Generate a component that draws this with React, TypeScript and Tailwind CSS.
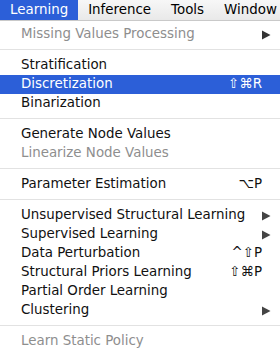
import React from "react";

type Item =
  | { sep: true }
  | { sep?: false; label: string; shortcut?: string; sub?: boolean; disabled?: boolean; active?: boolean };

const items: Item[] = [
  { label: "Missing Values Processing", sub: true, disabled: true },
  { sep: true },
  { label: "Stratification" },
  { label: "Discretization", shortcut: "⇧⌘R", active: true },
  { label: "Binarization" },
  { sep: true },
  { label: "Generate Node Values" },
  { label: "Linearize Node Values", disabled: true },
  { sep: true },
  { label: "Parameter Estimation", shortcut: "⌥P" },
  { sep: true },
  { label: "Unsupervised Structural Learning", sub: true },
  { label: "Supervised Learning", sub: true },
  { label: "Data Perturbation", shortcut: "^⇧P" },
  { label: "Structural Priors Learning", shortcut: "⇧⌘P" },
  { label: "Partial Order Learning" },
  { label: "Clustering", sub: true },
  { sep: true },
  { label: "Learn Static Policy", disabled: true },
];

function Arrow({ color }: { color: string }) {
  return (
    <svg width="9" height="10" viewBox="0 0 9 10" className="shrink-0">
      <polygon points="0,0.5 8.5,5 0,9.5" fill={color} />
    </svg>
  );
}

export default function App() {
  return (
    <div
      className="w-[280px] h-[356px] overflow-hidden bg-white text-[13.4px] text-[#111]"
      style={{ fontFamily: '"DejaVu Sans", sans-serif' }}
    >
      <div className="flex h-[21px] items-stretch bg-gradient-to-b from-[#f7f7f7] to-[#e9e9e9] border-b border-[#c9c9c9]">
        <div className="flex items-center px-[10px] bg-[#2c5fd8] text-white">Learning</div>
        <div className="flex items-center px-[10px] text-black">Inference</div>
        <div className="flex items-center px-[10px] text-black">Tools</div>
        <div className="flex items-center px-[10px] text-black">Window</div>
      </div>
      <div className="pt-[4px]">
        {items.map((it, i) =>
          it.sep ? (
            <div key={i} className="h-[12px] pt-[5px]">
              <div className="h-px bg-[#e2e2e2]" />
            </div>
          ) : (
            <div
              key={i}
              className={
                "flex h-[19px] items-center justify-between pl-[21px] pr-[9px] " +
                (it.active ? "bg-[#2c5fd8] text-white" : it.disabled ? "text-[#8e8e8e]" : "text-[#111]")
              }
            >
              <span className="whitespace-nowrap">{it.label}</span>
              {it.shortcut ? (
                <span className="mr-[9px] whitespace-nowrap">{it.shortcut}</span>
              ) : it.sub ? (
                <Arrow color={it.disabled ? "#333" : "#444"} />
              ) : null}
            </div>
          )
        )}
      </div>
    </div>
  );
}
